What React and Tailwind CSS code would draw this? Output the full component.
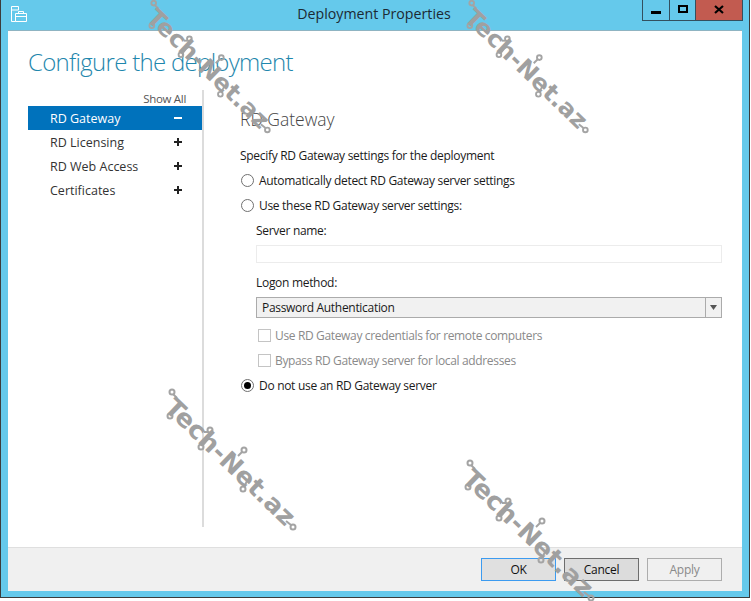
import React from "react";

const sideItems = [
  { label: "RD Gateway", active: true },
  { label: "RD Licensing" },
  { label: "RD Web Access" },
  { label: "Certificates" },
];

function Radio({ checked, label }) {
  return (
    <div className="flex items-center h-[25px]">
      <span className="w-[13px] h-[13px] ml-[1px] rounded-full border border-[#707070] bg-white flex items-center justify-center">
        {checked && <span className="w-[7px] h-[7px] rounded-full bg-black"></span>}
      </span>
      <span className="ml-[5px] text-[#1a1a1a]">{label}</span>
    </div>
  );
}

function Check({ label }) {
  return (
    <div className="flex items-center h-[25px] ml-[18px]">
      <span className="w-[13px] h-[13px] border border-[#c4c4c4] bg-white"></span>
      <span className="ml-[4px] text-[#8a8a8a] tracking-[-0.35px]">{label}</span>
    </div>
  );
}

function Btn({ label, className }) {
  return (
    <div className={`w-[75px] h-[23px] flex items-center justify-center border ${className}`}>
      {label}
    </div>
  );
}

// diagonal site stamp that lies over the dialog
function Watermark({ className, w = 132, h = 142 }) {
  return (
    <svg
      className={`absolute overflow-visible pointer-events-none ${className}`}
      width={w}
      height={h}
      viewBox="0 0 132 142"
    >
      <g stroke="#a4a4a4" strokeWidth="2" fill="none">
        <line x1="6" y1="5" x2="10" y2="9" />
        <line x1="4" y1="25" x2="9" y2="19" />
        <circle cx="5" cy="3" r="2.5" />
        <circle cx="3" cy="27" r="2.5" />
        <line x1="41" y1="43" x2="37" y2="43" />
        <circle cx="43" cy="41" r="2.5" />
        <line x1="36" y1="56" x2="41" y2="50" />
        <circle cx="34" cy="58" r="2.5" />
        <line x1="75" y1="63" x2="71" y2="67" />
        <circle cx="77" cy="61" r="2.5" />
        <line x1="77" y1="98" x2="80" y2="92" />
        <circle cx="76" cy="100" r="2.5" />
        <line x1="119" y1="132" x2="124" y2="136" />
        <circle cx="126" cy="138" r="2.5" />
      </g>
      <text
        x="-4"
        y="20"
        transform="rotate(44 -4 20)"
        textLength="170"
        lengthAdjust="spacingAndGlyphs"
        className="font-['DejaVu_Sans',sans-serif] font-bold text-[25px] tracking-normal"
        fill="#a0a0a0"
      >
        Tech-Net.az
      </text>
    </svg>
  );
}

export default function App() {
  return (
    <div className="relative w-[751px] h-[601px] overflow-hidden bg-white font-['Open_Sans','Noto_Sans',sans-serif] text-[12px] tracking-[-0.3px]">
      <div className="w-[750px] h-[598px] flex flex-col bg-[#65c9eb] border-l border-r border-b border-[#3c3c3c]">
        {/* title bar */}
        <div className="h-[30px] shrink-0 flex items-start relative">
          <svg className="ml-[9px] mt-[5px]" width="17" height="17" viewBox="0 0 17 17" fill="none" stroke="#fff" strokeWidth="1">
            <path d="M1.5 1.5h7v3.5h-7zM1.5 5v11.5h4" />
            <path d="M5.5 8.5h11v8h-11zM8.5 8.5v-2h5v2M5.5 11.5h11" />
          </svg>
          <div className="flex-1 h-[28px] flex items-center justify-center pr-[28px] text-[14.2px] tracking-normal text-[#1c2a33]">
            Deployment Properties
          </div>
          <div className="absolute right-[6px] top-0 flex h-[21px] border border-t-0 border-[#33505f]">
            <div className="w-[27px] flex items-end justify-center pb-[6px] border-r border-[#33505f]">
              <span className="w-[10px] h-[3px] bg-black"></span>
            </div>
            <div className="w-[26px] flex items-center justify-center pb-[2px] border-r border-[#33505f]">
              <span className="w-[10px] h-[8px] border-2 border-black"></span>
            </div>
            <div className="w-[46px] bg-[#c25b50] flex items-center justify-center pb-[1px]">
              <svg width="10" height="9" viewBox="0 0 10 9" stroke="#000" strokeWidth="2.2">
                <path d="M1 1l8 7M9 1l-8 7" />
              </svg>
            </div>
          </div>
        </div>

        {/* client area */}
        <div className="ml-[7px] w-[734px] h-[561px] flex flex-col bg-white border-t border-[#8fb4c2]">
          <div className="flex-1 flex flex-col pl-[20px]">
            <h1 className="mt-[13px] h-[36px] font-light text-[24px] tracking-[-0.7px] leading-[36px] text-[#1f87ad]">
              Configure the deployment
            </h1>
            <div className="flex mt-[10px]">
              {/* side nav */}
              <div className="w-[174px] h-[437px] pt-[1px] text-[#333]">
                <div className="h-[15px] text-right pr-[16px] leading-[15px] text-[11.5px] text-[#555]">Show All</div>
                {sideItems.map((item) => (
                  <div
                    key={item.label}
                    className={`h-[24px] flex items-center justify-between pl-[22px] pr-[20px] text-[12.5px] tracking-normal ${
                      item.active ? "bg-[#0072bc] text-white" : ""
                    }`}
                  >
                    <span className="pt-[2px]">{item.label}</span>
                    {item.active ? (
                      <span className="w-[8px] h-[2px] bg-white"></span>
                    ) : (
                      <svg width="8" height="8" viewBox="0 0 8 8" fill="#222">
                        <path d="M3 0h2v3h3v2H5v3H3V5H0V3h3z" />
                      </svg>
                    )}
                  </div>
                ))}
              </div>
              <div className="w-[2px] h-[437px] bg-[#dcdcdc]"></div>
              {/* settings */}
              <div className="w-[484px] ml-[36px] text-[#1a1a1a]">
                <h2 className="mt-[16px] h-[27px] font-light text-[17.5px] tracking-normal leading-[27px] text-[#444]">RD Gateway</h2>
                <p className="mt-[14px] h-[18px] leading-[18px]">Specify RD Gateway settings for the deployment</p>
                <div className="mt-[3px]">
                  <Radio label="Automatically detect RD Gateway server settings" />
                  <Radio label="Use these RD Gateway server settings:" />
                </div>
                <div className="ml-[16px] mt-[4px] h-[18px] leading-[18px]">Server name:</div>
                <div className="ml-[16px] mt-[5px] h-[18px] w-[466px] border border-[#ececec]"></div>
                <div className="ml-[16px] mt-[11px] h-[18px] leading-[18px]">Logon method:</div>
                <div className="ml-[16px] mt-[5px] w-[466px] h-[21px] flex border border-[#ababab] bg-[#f1f1f1]">
                  <span className="flex-1 pl-[5px] leading-[19px]">Password Authentication</span>
                  <span className="w-[16px] border-l border-[#ababab] flex items-center justify-center">
                    <svg width="7" height="5" viewBox="0 0 7 5" fill="#555">
                      <path d="M0 0h7L3.5 5z" />
                    </svg>
                  </span>
                </div>
                <div className="mt-[5px]">
                  <Check label="Use RD Gateway credentials for remote computers" />
                  <Check label="Bypass RD Gateway server for local addresses" />
                  <Radio checked label="Do not use an RD Gateway server" />
                </div>
              </div>
            </div>
          </div>
          {/* footer */}
          <div className="h-[44px] shrink-0 flex items-center justify-end gap-[8px] pr-[20px] bg-[#f0f0f0] border-t border-[#dfdfdf] text-[#111]">
            <Btn label="OK" className="border-[#3c9bf0] bg-[#e0e0e0]" />
            <Btn label="Cancel" className="border-[#6e6e6e] bg-[#dcdcdc]" />
            <Btn label="Apply" className="border-[#adadad] bg-[#f0f0f0] text-[#8a8a8a]" />
          </div>
        </div>
      </div>

      <Watermark className="left-[149px] top-[0px]" w={124} h={134} />
      <Watermark className="left-[467px] top-[0px]" w={124} h={134} />
      <Watermark className="left-[167px] top-[389px]" />
      <Watermark className="left-[465px] top-[460px]" />
    </div>
  );
}
